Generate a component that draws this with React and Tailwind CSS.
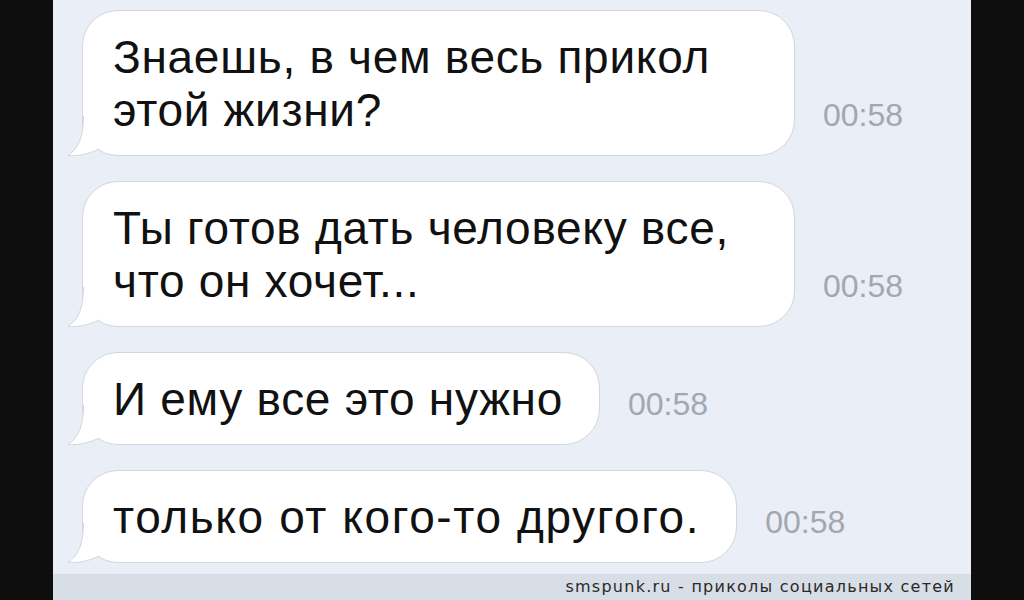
const messages = [
  { lines: ['Знаешь, в чем весь прикол', 'этой жизни?'], wide: true, track: 'tracking-[0.7px]' },
  { lines: ['Ты готов дать человеку все,', 'что он хочет...'], wide: true, track: 'tracking-[0.7px]' },
  { lines: ['И ему все это нужно'], wide: false, track: 'tracking-[0.7px]' },
  { lines: ['только от кого-то другого.'], wide: false, track: 'tracking-[1.6px]' },
];

const Tail = () => (
  <svg
    className="absolute left-[-16px] bottom-[-1px]"
    width="60"
    height="40"
    viewBox="0 0 60 40"
  >
    <path
      d="M16.5,0 C16.5,20 12,32 1,39.5 C12,40.5 24,37 32,33 L36,28 L17.5,0 Z"
      fill="#ffffff"
    />
    <path
      d="M16.5,0 C16.5,20 12,32 1,39.5 C12,40.5 24,37 32,33"
      fill="none"
      stroke="#d2d6dd"
      strokeWidth="1"
    />
  </svg>
);

const Bubble = ({ lines, wide, track }) => (
  <div className="flex items-end">
    <div
      className={`relative bg-white border border-[#d2d6dd] rounded-[36px] pl-[30px] pr-[36px] pt-[20px] pb-[18px] text-[46px] leading-[53px] text-[#111111] whitespace-nowrap ${track} ${
        wide ? 'w-[713px]' : ''
      }`}
    >
      <Tail />
      {lines.map((l, i) => (
        <div key={i}>{l}</div>
      ))}
    </div>
    <span className="ml-[28px] pb-[25px] text-[32px] leading-8 text-[#a3a7ae]">00:58</span>
  </div>
);

export default function App() {
  return (
    <div
      className="flex h-[600px] w-[1024px] overflow-hidden bg-[#0e0e0e]"
      style={{ fontFamily: '"Liberation Sans", Arial, sans-serif' }}
    >
      <div className="w-[53px] shrink-0 bg-[#0e0e0e]" />
      <div className="flex flex-1 flex-col bg-[#e9eef7]">
        <div className="flex flex-col gap-[25px] pt-[10px] pl-[29px]">
          {messages.map((m, i) => (
            <Bubble key={i} {...m} />
          ))}
        </div>
        <div className="mt-auto flex h-[26px] items-center justify-end bg-[#d8dee6] pr-[16px]">
          <span
            className="text-[16px] tracking-[1.25px] text-[#2a2a2a]"
            style={{ fontFamily: '"DejaVu Sans", sans-serif' }}
          >
            smspunk.ru - приколы социальных сетей
          </span>
        </div>
      </div>
      <div className="w-[53px] shrink-0 bg-[#0e0e0e]" />
    </div>
  );
}
